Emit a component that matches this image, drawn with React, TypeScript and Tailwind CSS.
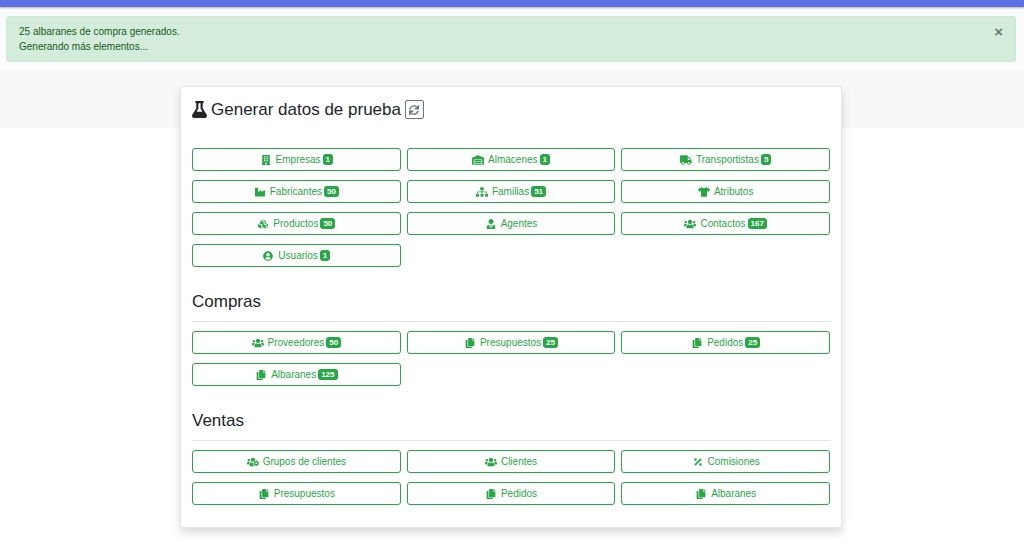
import type { IconType } from "react-icons";
import {
  FaBuilding,
  FaCopy,
  FaCubes,
  FaFlask,
  FaIndustry,
  FaPercentage,
  FaSitemap,
  FaSync,
  FaTruck,
  FaTshirt,
  FaUserCircle,
  FaUserTie,
  FaUsers,
  FaUsersCog,
  FaWarehouse,
} from "react-icons/fa";

interface Item {
  label: string;
  icon: IconType;
  count?: number;
}

const general: Item[] = [
  { label: "Empresas", icon: FaBuilding, count: 1 },
  { label: "Almacenes", icon: FaWarehouse, count: 1 },
  { label: "Transportistas", icon: FaTruck, count: 5 },
  { label: "Fabricantes", icon: FaIndustry, count: 50 },
  { label: "Familias", icon: FaSitemap, count: 51 },
  { label: "Atributos", icon: FaTshirt },
  { label: "Productos", icon: FaCubes, count: 50 },
  { label: "Agentes", icon: FaUserTie },
  { label: "Contactos", icon: FaUsers, count: 167 },
  { label: "Usuarios", icon: FaUserCircle, count: 1 },
];

const purchases: Item[] = [
  { label: "Proveedores", icon: FaUsers, count: 50 },
  { label: "Presupuestos", icon: FaCopy, count: 25 },
  { label: "Pedidos", icon: FaCopy, count: 25 },
  { label: "Albaranes", icon: FaCopy, count: 125 },
];

const sales: Item[] = [
  { label: "Grupos de clientes", icon: FaUsersCog },
  { label: "Clientes", icon: FaUsers },
  { label: "Comisiones", icon: FaPercentage },
  { label: "Presupuestos", icon: FaCopy },
  { label: "Pedidos", icon: FaCopy },
  { label: "Albaranes", icon: FaCopy },
];

function ButtonGrid({ items }: { items: Item[] }) {
  return (
    <div className="grid grid-cols-3 gap-x-1.5 gap-y-[9px]">
      {items.map(({ label, icon: Icon, count }) => (
        <button
          key={label}
          type="button"
          className="flex h-[23px] items-center justify-center rounded-[3px] border border-[#28a745] text-[10px] text-[#28a745] hover:bg-green-50"
        >
          <Icon className="mr-1 h-[10px] w-[12px]" />
          <span>{label}</span>
          {count !== undefined && (
            <span className="ml-0.5 rounded-[3px] bg-[#28a745] px-[3px] text-[8px] leading-[11px] font-bold text-white">
              {count}
            </span>
          )}
        </button>
      ))}
    </div>
  );
}

function Section({ title, items }: { title: string; items: Item[] }) {
  return (
    <section className="mt-[25px]">
      <h2 className="text-[17px] leading-5">{title}</h2>
      <hr className="mt-[9px] mb-[9px] border-black/10" />
      <ButtonGrid items={items} />
    </section>
  );
}

export default function App() {
  return (
    <div className="min-h-screen bg-white font-['Liberation_Sans',Arial,sans-serif] text-[#212529]">
      {/* Top bar */}
      <header className="relative h-[7px] bg-[#5e72e4] shadow-[0_1px_2px_rgba(0,0,0,0.3)]" />

      {/* Notice */}
      <div className="bg-[#fafbfc] pt-[9px] pr-2 pb-[9px] pl-1.5">
        <div
          role="alert"
          className="flex items-start justify-between rounded-[3px] border border-[#cde9d4] bg-[#d4edda] px-3 py-[7px] text-[10px] leading-[15px] text-[#155724]"
        >
          <p>
            25 albaranes de compra generados.
            <br />
            Generando más elementos...
          </p>
          <button type="button" aria-label="Cerrar" className="text-[15px] leading-[15px] font-bold text-black/50">
            ×
          </button>
        </div>
      </div>
      <div className="h-[57px] bg-[#f7f8fa]" />

      <main className="-mt-[42px] pr-2 pb-5 pl-1.5">
        <div className="relative mx-auto max-w-[662px] rounded-[3px] border border-black/10 bg-white px-[11px] pt-3 pb-[22px] shadow-[0_5px_10px_rgba(0,0,0,0.15)]">
          <div className="mb-7 flex items-center">
            <FaFlask className="mr-1 h-[17px] w-[15px]" />
            <h1 className="text-[17px] leading-[21px]">Generar datos de prueba</h1>
            <button
              type="button"
              aria-label="Recargar"
              className="ml-1 flex h-[19px] w-[19px] items-center justify-center rounded-[2px] border border-[#6c757d] text-[#6c757d]"
            >
              <FaSync className="h-[10px] w-[10px]" />
            </button>
          </div>
          <ButtonGrid items={general} />
          <Section title="Compras" items={purchases} />
          <Section title="Ventas" items={sales} />
        </div>
      </main>
    </div>
  );
}
